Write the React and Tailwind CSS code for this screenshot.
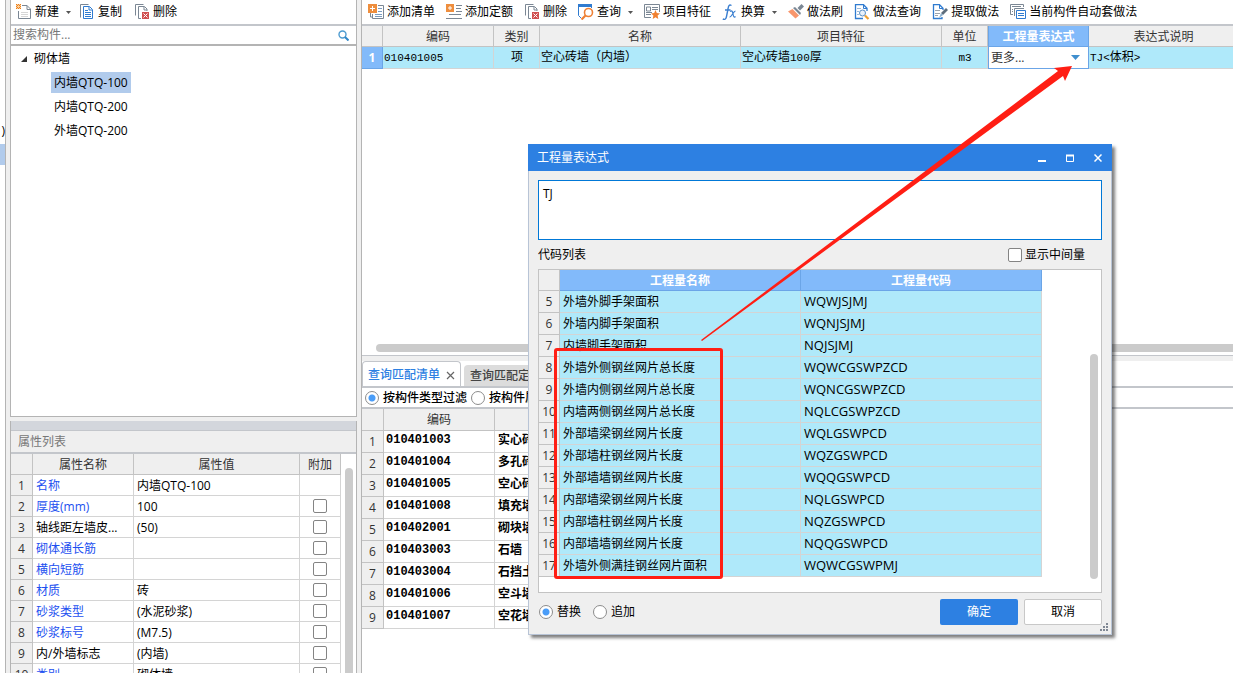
import { useState } from "react";

const FONT = "font-['Open_Sans','Noto_Sans_CJK_SC',sans-serif]";
const MONO = "font-['Liberation_Mono','Noto_Sans_CJK_SC',monospace]";

const properties = [
  { name: "名称", value: "内墙QTQ-100", blue: true, noCheck: true },
  { name: "厚度(mm)", value: "100", blue: true },
  { name: "轴线距左墙皮...", value: "(50)" },
  { name: "砌体通长筋", value: "", blue: true },
  { name: "横向短筋", value: "", blue: true },
  { name: "材质", value: "砖", blue: true },
  { name: "砂浆类型", value: "(水泥砂浆)", blue: true },
  { name: "砂浆标号", value: "(M7.5)", blue: true },
  { name: "内/外墙标志", value: "(内墙)" },
  { name: "类别", value: "砌体墙", blue: true },
];

const matches = [
  ["010401003", "实心砖墙"],
  ["010401004", "多孔砖墙"],
  ["010401005", "空心砖墙"],
  ["010401008", "填充墙"],
  ["010402001", "砌块墙"],
  ["010403003", "石墙"],
  ["010403004", "石挡土墙"],
  ["010401006", "空斗墙"],
  ["010401007", "空花墙"],
];

const codes = [
  ["外墙外脚手架面积", "WQWJSJMJ"],
  ["外墙内脚手架面积", "WQNJSJMJ"],
  ["内墙脚手架面积", "NQJSJMJ"],
  ["外墙外侧钢丝网片总长度", "WQWCGSWPZCD"],
  ["外墙内侧钢丝网片总长度", "WQNCGSWPZCD"],
  ["内墙两侧钢丝网片总长度", "NQLCGSWPZCD"],
  ["外部墙梁钢丝网片长度", "WQLGSWPCD"],
  ["外部墙柱钢丝网片长度", "WQZGSWPCD"],
  ["外部墙墙钢丝网片长度", "WQQGSWPCD"],
  ["内部墙梁钢丝网片长度", "NQLGSWPCD"],
  ["内部墙柱钢丝网片长度", "NQZGSWPCD"],
  ["内部墙墙钢丝网片长度", "NQQGSWPCD"],
  ["外墙外侧满挂钢丝网片面积", "WQWCGSWPMJ"],
];

function Svg({ children }) {
  return (
    <svg width="16" height="16" viewBox="0 0 16 16" fill="none" className="shrink-0">
      {children}
    </svg>
  );
}

function NewIcon() {
  return (
    <Svg>
      <path d="M6 1.500h5l3.500 3.500v9.500h-12V7" stroke="#7b8794" fill="#fff" />
      <path d="M11 1.500v4h3.500" stroke="#7b8794" />
      <path d="M5 8.500h7M5 10.500h7M5 12.500h7" stroke="#d6d6d6" />
      <path d="M0 0h5v5H0z" fill="#f8d0a0" />
      <path d="M0 0h1v1H0zM2 0h1v1H2zM4 0h1v1H4zM1 1h1v1H1zM3 1h1v1H3zM0 2h1v1H0zM4 2h1v1H4zM1 3h1v1H1zM3 3h1v1H3zM0 4h1v1H0zM2 4h1v1H2zM4 4h1v1H4z" fill="#ee7d18" />
    </Svg>
  );
}

function CopyIcon() {
  return (
    <Svg>
      <path d="M1.500 13.500v-13h8" stroke="#7b8794" />
      <path d="M4.500 2.500h6l3 3v9h-9z" stroke="#2f7bd0" fill="#fff" />
      <path d="M10 3v3h3" stroke="#2f7bd0" />
      <path d="M6 6.500h3M6 8.500h6M6 10.500h6M6 12.500h6" stroke="#2f7bd0" />
    </Svg>
  );
}

function DeleteIcon() {
  return (
    <Svg>
      <path d="M1.500 11.500v-11h8" stroke="#7b8794" />
      <path d="M7 14.500H4.500v-12h6l2.500 2.500V7" stroke="#7b8794" />
      <path d="M10 3v3h3" stroke="#7b8794" />
      <path d="M8 8h7v7H8z" fill="#d05050" />
      <path d="M9.500 9.500l4 4M13.500 9.500l-4 4" stroke="#fff" />
    </Svg>
  );
}

function AddListIcon() {
  return (
    <Svg>
      <path d="M10 1.500h5.500v13h-11V10" stroke="#7b8794" fill="#fff" />
      <path d="M2.500 9v4h2" stroke="#7b8794" />
      <path d="M10 4.500h4M10 7.500h4M7 10.500h7M7 12.500h7" stroke="#7b9cc0" />
      <path d="M0 0h9v9H0z" fill="#ee8e3e" />
      <path d="M4.500 2v5M2 4.500h5" stroke="#fff" />
    </Svg>
  );
}

function AddQuotaIcon() {
  return (
    <Svg>
      <path d="M10 1.500h6M10 4.500h5M10 7.500h6M3 10.500h12M0 14.500h16" stroke="#7b8794" />
      <path d="M0 0h8v8H0z" fill="#ee8e3e" />
      <path d="M4 2v4M2 4h4" stroke="#fff" />
    </Svg>
  );
}

function QueryIcon() {
  return (
    <Svg>
      <path d="M.5 2v9.500L3 14M13.500 2v2" stroke="#2f7bd0" />
      <path d="M0 0h14v3H0z" fill="#2f7bd0" />
      <circle cx="10.500" cy="8.500" r="4" stroke="#ee8035" strokeWidth="1.600" fill="#fff" />
      <path d="M7.500 11.500L3.500 15.500" stroke="#ee8035" strokeWidth="2.200" />
    </Svg>
  );
}

function FeatureIcon() {
  return (
    <Svg>
      <path d="M7 13.500H.5V.5h15V8" stroke="#7b8794" />
      <path d="M2.500 3h4v4h-4z" stroke="#7b8794" />
      <path d="M8 3.500h6M8 5.500h6M2 8.500h6M2 10.500h5" stroke="#7b8794" />
      <path d="M11.500 6l1.300 3 3.200.4-2.400 2.200.7 3.400-2.800-1.700-2.800 1.700.7-3.400L7 9.400l3.200-.4z" fill="#f08030" />
    </Svg>
  );
}

function FxIcon() {
  return (
    <Svg>
      <path d="M9.500 1.500C7 .2 6.500 2 6 5L4.500 12.500C4 15 3 16 .8 15M3 6h5.500" stroke="#3b7fd0" strokeWidth="1.400" />
      <path d="M8 7.500c2-1.500 2.500 0 3 2.500s1 4 2.500 2.500M13.500 7c-2 0-4 6.500-6 6" stroke="#3b7fd0" strokeWidth="1.200" />
    </Svg>
  );
}

function BrushIcon() {
  return (
    <Svg>
      <path d="M13.500 0l2.500 2.500-4 4-2.500-2.500z" fill="#7b8794" />
      <path d="M5 4l2-1 6 6-1 2z" fill="#7b8794" />
      <path d="M4.500 5l6.500 6.500L7.500 14.500 0 7.500z" fill="#f8966c" />
    </Svg>
  );
}

function FindDocIcon() {
  return (
    <Svg>
      <path d="M9 14.500H1.500V.7h8l3.500 3.500V7" stroke="#2f7bd0" strokeWidth="1.300" />
      <path d="M9.500 1v3.500H13" stroke="#2f7bd0" />
      <path d="M3 4.500h4M3 7.500h2M3 10.500h2" stroke="#9bb7d6" />
      <circle cx="8.500" cy="9" r="3" stroke="#5b8fc4" fill="#e8f1fa" />
      <path d="M11 11.500l3.500 3.500" stroke="#f0a030" strokeWidth="2.200" />
    </Svg>
  );
}

function ExtractIcon() {
  return (
    <Svg>
      <path d="M10 13v1.500H1.500V.7h6l3.500 3.500V6" stroke="#2f7bd0" strokeWidth="1.300" />
      <path d="M7.500 1v3.500H11" stroke="#2f7bd0" />
      <path d="M3 6.500h5M3 9.500h5M3 11.500h3" stroke="#9aa3ad" />
      <path d="M14 4l2 2-5 5-2-2z" fill="#5d6d7c" />
      <path d="M9 9l2 2-4 3z" fill="#8fb0cc" />
    </Svg>
  );
}

function AutoIcon() {
  return (
    <Svg>
      <path d="M3 10.500H.5V.5h13V3M2 2.500h9M2 5.500h1M2 7.500h1" stroke="#7b8794" />
      <path d="M4.500 12V4.500H14" stroke="#7b8794" />
      <path d="M6.500 6.500h9v8h-9z" stroke="#2f7bd0" fill="#fff" />
      <path d="M8 9.500h6M8 11.500h6" stroke="#2f7bd0" />
    </Svg>
  );
}

function Caret({ className }) {
  return (
    <svg width="5" height="3" viewBox="0 0 5 3" className={className}>
      <path d="M0 0h5L2.500 3z" fill="currentColor" />
    </svg>
  );
}

function ToolButton({ icon, label, caret, className = "" }) {
  return (
    <button className={`flex shrink-0 items-center gap-[3px] whitespace-nowrap leading-4 ${className}`}>
      {icon}
      {label}
      {caret && <Caret className="ml-1 text-[#555]" />}
    </button>
  );
}

function Th({ children, className = "" }) {
  return (
    <th className={`border-r border-b border-[#c3c3c3] bg-[#efefef] p-0 pt-px font-normal text-[#333] ${className}`}>
      {children}
    </th>
  );
}

function CheckBox(props) {
  return (
    <input
      type="checkbox"
      className="block size-[14px] shrink-0 appearance-none rounded-[2px] border border-[#848484] bg-white checked:bg-[#4a9df8]"
      {...props}
    />
  );
}

function RadioOption({ label, ...props }) {
  return (
    <label className="flex items-center gap-1 whitespace-nowrap">
      <input
        type="radio"
        className="size-[14px] shrink-0 appearance-none rounded-full border border-[#8c8c8c] bg-white checked:bg-[radial-gradient(circle,#4a9df8_3px,#fff_4px)]"
        {...props}
      />
      {label}
    </label>
  );
}

function ComponentPanel() {
  return (
    <section className="flex h-[417px] shrink-0 flex-col border-x border-b border-[#b4b4b4] bg-white">
      <div className="flex h-[26px] shrink-0 items-center gap-2 border-b-2 border-[#c3c6cb] pl-[5px]">
        <ToolButton icon={<NewIcon />} label="新建" caret />
        <ToolButton icon={<CopyIcon />} label="复制" />
        <ToolButton icon={<DeleteIcon />} label="删除" className="ml-1" />
      </div>
      <div className="flex h-5 shrink-0 items-center border-b-2 border-[#b4b4b4] pr-[7px]">
        <input
          aria-label="搜索构件"
          placeholder="搜索构件..."
          className="min-w-0 flex-1 pl-[2px] leading-4 outline-none placeholder:text-[#777]"
        />
        <svg width="11" height="11" viewBox="0 0 11 11" fill="none">
          <circle cx="4.500" cy="4.500" r="3.500" stroke="#4d9bd0" strokeWidth="1.400" />
          <path d="M7 7l3.500 3.500" stroke="#2f86c8" strokeWidth="2" />
        </svg>
      </div>
      <ul>
        <li>
          <div className="flex h-[26px] items-center gap-[7px] pl-[10px]">
            <svg width="6" height="6" viewBox="0 0 6 6">
              <path d="M6 0v6H0z" fill="#333" />
            </svg>
            砌体墙
          </div>
          <ul className="flex flex-col items-start gap-[3px] pl-10">
            <li className="h-[21px] bg-[#b1cbec] px-[3px] leading-[21px]">内墙QTQ-100</li>
            <li className="h-[21px] px-[3px] leading-[21px]">内墙QTQ-200</li>
            <li className="h-[21px] px-[3px] leading-[21px]">外墙QTQ-200</li>
          </ul>
        </li>
      </ul>
    </section>
  );
}

function PropertyPanel() {
  return (
    <section className="mt-1 flex min-h-0 flex-1 flex-col border-x border-[#b4b4b4]">
      <div className="h-[10px] shrink-0 border-b border-[#c3c6cb] bg-[#d3d6dc]" />
      <h2 className="h-[23px] shrink-0 border-b-2 border-[#c3c6cb] pl-[7px] leading-[21px] text-[#777]">属性列表</h2>
      <div className="flex min-h-0 flex-1 overflow-hidden bg-white">
        <table className="h-0 flex-1 table-fixed border-separate border-spacing-0">
          <colgroup>
            <col className="w-[22px]" />
            <col className="w-[101px]" />
            <col />
            <col className="w-[41px]" />
          </colgroup>
          <thead>
            <tr className="h-[21px]">
              <Th />
              <Th>属性名称</Th>
              <Th>属性值</Th>
              <Th>附加</Th>
            </tr>
          </thead>
          <tbody>
            {properties.map((p, i) => (
              <tr key={p.name} className="h-[21px] leading-4">
                <Th>{i + 1}</Th>
                <td className={`border-r border-b border-[#d4d4d4] p-0 pt-px pl-[3px] whitespace-nowrap ${p.blue ? "text-[#1c50f0]" : ""}`}>
                  {p.name}
                </td>
                <td className="border-r border-b border-[#d4d4d4] p-0 pt-px pl-[3px]">{p.value}</td>
                <td className="border-r border-b border-[#d4d4d4] p-0">
                  {!p.noCheck && (
                    <div className="flex justify-center">
                      <CheckBox aria-label={`附加 ${p.name}`} />
                    </div>
                  )}
                </td>
              </tr>
            ))}
          </tbody>
        </table>
        <div className="w-[15px] shrink-0 pt-[14px] pl-1">
          <div className="h-full w-2 rounded-t-full bg-[#cbcbcb]" />
        </div>
      </div>
    </section>
  );
}

function ListToolbar() {
  return (
    <div className="flex h-[26px] shrink-0 items-center gap-[11px] overflow-hidden border-b-2 border-[#c3c6cb] pr-2 pl-[6px]">
      <ToolButton icon={<AddListIcon />} label="添加清单" />
      <ToolButton icon={<AddQuotaIcon />} label="添加定额" />
      <ToolButton icon={<DeleteIcon />} label="删除" />
      <ToolButton icon={<QueryIcon />} label="查询" caret />
      <ToolButton icon={<FeatureIcon />} label="项目特征" />
      <ToolButton icon={<FxIcon />} label="换算" caret />
      <ToolButton icon={<BrushIcon />} label="做法刷" />
      <ToolButton icon={<FindDocIcon />} label="做法查询" />
      <ToolButton icon={<ExtractIcon />} label="提取做法" />
      <ToolButton icon={<AutoIcon />} label="当前构件自动套做法" />
    </div>
  );
}

function ListTable() {
  const cell = "border-r border-b border-[#d4d4d4] bg-[#afe9fa] p-0 pl-px";
  return (
    <table className="w-[calc(100%+6px)] table-fixed border-separate border-spacing-0">
      <colgroup>
        <col className="w-[21px]" />
        <col className="w-[111px]" />
        <col className="w-[46px]" />
        <col className="w-[201px]" />
        <col className="w-[201px]" />
        <col className="w-[46px]" />
        <col className="w-[101px]" />
        <col />
      </colgroup>
      <thead>
        <tr className="h-[21px]">
          <Th />
          <Th>编码</Th>
          <Th>类别</Th>
          <Th>名称</Th>
          <Th>项目特征</Th>
          <Th>单位</Th>
          <th className="border border-t-0 border-[#6ba5e7] bg-[#82bafa] p-0 pt-px font-bold text-white">工程量表达式</th>
          <Th>表达式说明</Th>
        </tr>
      </thead>
      <tbody>
        <tr className={`h-[22px] leading-4 ${MONO}`}>
          <th className={`border-r border-b border-[#6ba5e7] bg-[#82bafa] p-0 font-bold text-white ${FONT}`}>1</th>
          <td className={`${cell} text-[11px]`}>010401005</td>
          <td className={`${cell} text-center`}>项</td>
          <td className={cell}>空心砖墙（内墙）</td>
          <td className={cell}>
            空心砖墙<span className="text-[11px]">100</span>厚
          </td>
          <td className={`${cell} text-center text-[11px]`}>m3</td>
          <td className="border border-t-0 border-[#6ba5e7] bg-white p-0">
            <button className={`flex w-full items-center justify-between pr-2 pl-[2px] text-[#333] ${FONT}`}>
              更多...
              <svg width="9" height="5" viewBox="0 0 9 5">
                <path d="M0 0h9L4.500 5z" fill="#3f8fce" />
              </svg>
            </button>
          </td>
          <td className={cell}>
            <span className="text-[11px]">TJ&lt;</span>体积<span className="text-[11px]">&gt;</span>
          </td>
        </tr>
      </tbody>
    </table>
  );
}

function MatchPanel() {
  const [filter, setFilter] = useState("type");
  return (
    <section className="flex min-h-0 flex-1 flex-col overflow-hidden bg-white">
      <div className="flex h-[27px] shrink-0 items-end gap-[3px] border-b-2 border-[#c3c6cb]">
        <button className="flex h-[25px] items-center gap-[6px] rounded-t border border-b-0 border-[#c3c6cb] px-[5px] pt-[2px] font-medium text-[#2d80e2]">
          查询匹配清单
          <svg width="9" height="9" viewBox="0 0 9 9">
            <path d="M1 1l7 7M8 1L1 8" stroke="#666" strokeWidth="1.200" />
          </svg>
        </button>
        <button className="h-[21px] rounded-t bg-[#dcdcdc] px-[6px] font-medium text-[#444]">查询匹配定额</button>
      </div>
      <div className="flex h-[21px] shrink-0 items-center gap-1 border-b-2 border-[#c3c6cb] pl-[3px] leading-4 font-medium">
        <RadioOption label="按构件类型过滤" name="filter" checked={filter === "type"} onChange={() => setFilter("type")} />
        <RadioOption label="按构件属性过滤" name="filter" checked={filter === "prop"} onChange={() => setFilter("prop")} />
      </div>
      <table className="w-1/2 table-fixed border-separate border-spacing-0">
        <colgroup>
          <col className="w-[22px]" />
          <col className="w-[111px]" />
          <col />
        </colgroup>
        <thead>
          <tr className="h-[22px]">
            <Th />
            <Th>编码</Th>
            <Th>名称</Th>
          </tr>
        </thead>
        <tbody className="font-bold">
          {matches.map(([code, name], i) => (
            <tr key={code} className="h-[22px] leading-4">
              <Th className="pt-1 font-bold">{i + 1}</Th>
              <td className={`border-r border-b border-[#d4d4d4] p-0 pb-1 pl-[2px] ${MONO}`}>{code}</td>
              <td className="border-r border-b border-[#d4d4d4] p-0 pb-1 pl-[3px]">{name}</td>
            </tr>
          ))}
        </tbody>
      </table>
    </section>
  );
}

function ExpressionDialog() {
  const [mode, setMode] = useState("replace");
  return (
    <div
      role="dialog"
      aria-label="工程量表达式"
      className="absolute top-[144px] left-[528px] w-[584px] border border-t-0 border-[#b8c4d6] bg-[#efefef] shadow-[3px_3px_3px_rgba(0,0,0,0.5)]"
    >
      <header className="-mx-px flex h-[27px] items-center bg-[#2d80e2] pr-[10px] pl-[9px] text-white">
        <h2 className="flex-1">工程量表达式</h2>
        <div className="flex gap-5">
          <button aria-label="最小化">
            <svg width="8" height="8" viewBox="0 0 8 8"><path d="M0 7h8" stroke="#fff" strokeWidth="2" /></svg>
          </button>
          <button aria-label="最大化">
            <svg width="8" height="8" viewBox="0 0 8 8"><path d="M.5 1v6.500h7V1M0 1.500h8" stroke="#fff" fill="none" /><path d="M0 .5h8v2H0z" fill="#fff" /></svg>
          </button>
          <button aria-label="关闭">
            <svg width="8" height="8" viewBox="0 0 8 8"><path d="M.5.5l7 7M7.500.5l-7 7" stroke="#fff" strokeWidth="1.500" /></svg>
          </button>
        </div>
      </header>
      <div className="px-[9px] pt-[9px] pb-[9px]">
        <textarea
          aria-label="表达式"
          defaultValue="TJ"
          className="block h-[60px] w-full resize-none border border-[#0078d7] bg-white px-1 py-[5px] leading-4 outline-none"
        />
        <div className="flex h-[29px] items-center justify-between pr-[17px]">
          <span>代码列表</span>
          <label className="flex items-center gap-[3px]">
            <CheckBox />
            显示中间量
          </label>
        </div>
        <div className="flex h-[324px] justify-between border border-[#c3c3c3] bg-white">
          <table className="h-0 w-[503px] table-fixed border-separate border-spacing-0">
            <colgroup>
              <col className="w-[21px]" />
              <col />
              <col />
            </colgroup>
            <thead>
              <tr className="h-[21px]">
                <Th />
                <th className="border-r border-b border-[#6ba5e7] bg-[#82bafa] p-0 pt-px font-bold text-white">工程量名称</th>
                <th className="border-r border-b border-[#6ba5e7] bg-[#82bafa] p-0 pt-px font-bold text-white">工程量代码</th>
              </tr>
            </thead>
            <tbody>
              {codes.map(([name, code], i) => (
                <tr key={code} className="h-[22px] leading-4">
                  <Th>{i + 5}</Th>
                  <td className="border-r border-b border-[#d4d4d4] bg-[#afe9fa] p-0 pl-[3px]">{name}</td>
                  <td className="border-r border-b border-[#d4d4d4] bg-[#afe9fa] p-0 pb-[2px] pl-[3px] text-[13px]">{code}</td>
                </tr>
              ))}
            </tbody>
          </table>
          <div className="flex flex-col justify-end pr-[3px] pb-[13px]">
            <div className="h-[225px] w-2 rounded-full bg-[#cbcbcb]" />
          </div>
        </div>
        <footer className="mt-[6px] flex items-center gap-[6px]">
          <div className="flex flex-1 gap-3 pl-px">
            <RadioOption label="替换" name="mode" checked={mode === "replace"} onChange={() => setMode("replace")} />
            <RadioOption label="追加" name="mode" checked={mode === "append"} onChange={() => setMode("append")} />
          </div>
          <button className="h-[26px] w-[78px] rounded-[2px] bg-[#2d80e2] text-white">确定</button>
          <button className="h-[26px] w-[78px] rounded-[2px] border border-[#c8c8c8] bg-white">取消</button>
        </footer>
      </div>
      <svg width="8" height="8" viewBox="0 0 8 8" className="absolute right-[3px] bottom-[3px]">
        <path d="M6 0h2v2H6zM3 3h2v2H3zM6 3h2v2H6zM0 6h2v2H0zM3 6h2v2H3zM6 6h2v2H6z" fill="#808894" />
      </svg>
    </div>
  );
}

export default function App() {
  return (
    <div className={`relative flex h-screen overflow-hidden bg-[#efefef] text-[12px] leading-4 text-black ${FONT}`}>
      <div className="flex w-[6px] shrink-0 flex-col justify-start overflow-hidden border-r border-[#b4b4b4] bg-white pt-[123px]">
        <span className="self-end leading-4">)</span>
        <div className="mt-[5px] h-[21px] shrink-0 bg-[#b1cbec]" />
      </div>

      <aside className="ml-1 flex w-[347px] shrink-0 flex-col">
        <ComponentPanel />
        <PropertyPanel />
      </aside>

      <main className="ml-1 flex min-w-0 flex-1 flex-col border-l border-[#b4b4b4]">
        <section className="mb-[5px] flex h-[356px] shrink-0 flex-col overflow-hidden border-b border-[#c3c6cb] bg-white">
          <ListToolbar />
          <ListTable />
          <div className="mt-auto mb-[3px] ml-[14px] h-2 rounded-l-full bg-[#cbcbcb]" />
        </section>
        <MatchPanel />
      </main>

      <ExpressionDialog />

      {/* markup drawn over the window */}
      <div className="pointer-events-none absolute top-[348px] left-[554px] h-[231px] w-[169px] rounded-[3px] border-3 border-[#ff1e14]" />
      <svg width="380" height="284" viewBox="0 0 380 284" className="pointer-events-none absolute top-[60px] left-[700px]">
        <path d="M1 280L358 11L354 8L372 6L365 21L363 16L2 281z" fill="#ff1e14" />
      </svg>
    </div>
  );
}
